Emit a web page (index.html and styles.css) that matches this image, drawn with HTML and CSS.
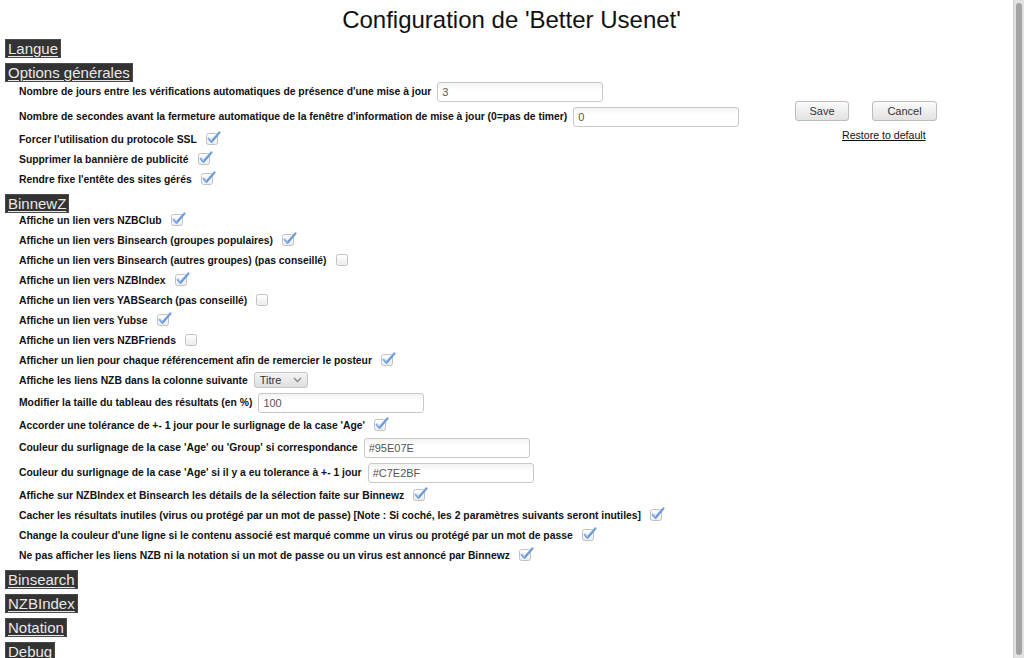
FILE: index.html
```html
<!DOCTYPE html>
<html lang="fr">
<head>
<meta charset="utf-8">
<title>Configuration de 'Better Usenet'</title>
<link rel="stylesheet" href="styles.css">
</head>
<body>
<svg class="defs" width="0" height="0" aria-hidden="true">
  <defs>
    <linearGradient id="cbg" x1="0" y1="0" x2="0" y2="1">
      <stop offset="0" stop-color="#ffffff"/>
      <stop offset="1" stop-color="#ececec"/>
    </linearGradient>
    <linearGradient id="chk" x1="0" y1="0" x2="1" y2="1">
      <stop offset="0" stop-color="#9cc0ec"/>
      <stop offset="1" stop-color="#4580cc"/>
    </linearGradient>
    <symbol id="box" viewBox="0 0 15 17">
      <rect x="0.5" y="4.5" width="11" height="11" rx="2" fill="url(#cbg)" stroke="#c2c2c2"/>
    </symbol>
    <symbol id="tick" viewBox="0 0 15 17">
      <rect x="0.5" y="4.5" width="11" height="11" rx="2" fill="url(#cbg)" stroke="#c2c2c2"/>
      <path d="M2.8 9.6 L5.6 12.6 L13.4 3.4" fill="none" stroke="url(#chk)" stroke-width="2.3" stroke-linejoin="round" stroke-linecap="round"/>
      <path d="M3.3 9.4 L5.6 11.6" fill="none" stroke="#d6e6f8" stroke-width="0.8" stroke-linecap="round"/>
    </symbol>
  </defs>
</svg>

<div class="scrollbar" aria-hidden="true"><div class="thumb"></div></div>

<h1 class="title">Configuration de 'Better Usenet'</h1>

<section class="section">
  <a class="section-title" href="#">Langue</a>
</section>

<section class="section">
  <a class="section-title" href="#">Options générales</a>
  <div class="general">
    <div class="rows rows-general">
      <div class="row row-input"><span class="label">Nombre de jours entre les vérifications automatiques de présence d'une mise à jour</span><input class="text" type="text" value="3"></div>
      <div class="row row-input"><span class="label">Nombre de secondes avant la fermeture automatique de la fenêtre d'information de mise à jour (0=pas de timer)</span><input class="text" type="text" value="0"></div>
      <div class="row"><span class="label">Forcer l'utilisation du protocole SSL</span><svg class="cb"><use href="#tick"/></svg></div>
      <div class="row"><span class="label">Supprimer la bannière de publicité</span><svg class="cb"><use href="#tick"/></svg></div>
      <div class="row"><span class="label">Rendre fixe l'entête des sites gérés</span><svg class="cb"><use href="#tick"/></svg></div>
    </div>
    <div class="actions">
      <div class="buttons">
        <button class="btn btn-save" type="button">Save</button>
        <button class="btn btn-cancel" type="button">Cancel</button>
      </div>
      <a class="restore" href="#">Restore to default</a>
    </div>
  </div>
</section>

<section class="section">
  <a class="section-title" href="#">BinnewZ</a>
  <div class="rows rows-binnewz">
    <div class="row"><span class="label">Affiche un lien vers NZBClub</span><svg class="cb"><use href="#tick"/></svg></div>
    <div class="row"><span class="label">Affiche un lien vers Binsearch (groupes populaires)</span><svg class="cb"><use href="#tick"/></svg></div>
    <div class="row"><span class="label">Affiche un lien vers Binsearch (autres groupes) (pas conseillé)</span><svg class="cb"><use href="#box"/></svg></div>
    <div class="row"><span class="label">Affiche un lien vers NZBIndex</span><svg class="cb"><use href="#tick"/></svg></div>
    <div class="row"><span class="label">Affiche un lien vers YABSearch (pas conseillé)</span><svg class="cb"><use href="#box"/></svg></div>
    <div class="row"><span class="label">Affiche un lien vers Yubse</span><svg class="cb"><use href="#tick"/></svg></div>
    <div class="row"><span class="label">Affiche un lien vers NZBFriends</span><svg class="cb"><use href="#box"/></svg></div>
    <div class="row"><span class="label">Afficher un lien pour chaque référencement afin de remercier le posteur</span><svg class="cb"><use href="#tick"/></svg></div>
    <div class="row"><span class="label">Affiche les liens NZB dans la colonne suivante</span><span class="select">Titre<svg class="chev" width="9" height="6" viewBox="0 0 9 6"><path d="M1 1 L4.5 4.5 L8 1" fill="none" stroke="#888" stroke-width="1.4"/></svg></span></div>
    <div class="row row-input"><span class="label">Modifier la taille du tableau des résultats (en %)</span><input class="text" type="text" value="100"></div>
    <div class="row"><span class="label">Accorder une tolérance de +- 1 jour pour le surlignage de la case 'Age'</span><svg class="cb"><use href="#tick"/></svg></div>
    <div class="row row-input"><span class="label">Couleur du surlignage de la case 'Age' ou 'Group' si correspondance</span><input class="text" type="text" value="#95E07E"></div>
    <div class="row row-input"><span class="label">Couleur du surlignage de la case 'Age' si il y a eu tolerance à +- 1 jour</span><input class="text" type="text" value="#C7E2BF"></div>
    <div class="row"><span class="label">Affiche sur NZBIndex et Binsearch les détails de la sélection faite sur Binnewz</span><svg class="cb"><use href="#tick"/></svg></div>
    <div class="row"><span class="label">Cacher les résultats inutiles (virus ou protégé par un mot de passe) [Note : Si coché, les 2 paramètres suivants seront inutiles]</span><svg class="cb"><use href="#tick"/></svg></div>
    <div class="row"><span class="label">Change la couleur d'une ligne si le contenu associé est marqué comme un virus ou protégé par un mot de passe</span><svg class="cb"><use href="#tick"/></svg></div>
    <div class="row"><span class="label">Ne pas afficher les liens NZB ni la notation si un mot de passe ou un virus est annoncé par Binnewz</span><svg class="cb"><use href="#tick"/></svg></div>
  </div>
</section>

<section class="section">
  <a class="section-title" href="#">Binsearch</a>
</section>
<section class="section">
  <a class="section-title" href="#">NZBIndex</a>
</section>
<section class="section">
  <a class="section-title" href="#">Notation</a>
</section>
<section class="section">
  <a class="section-title" href="#">Debug</a>
</section>
</body>
</html>
```

FILE: styles.css
```css
html {
  background: #ffffff;
  scrollbar-width: none;
}

html::-webkit-scrollbar {
  display: none;
}

body {
  margin: 0;
  padding: 0 17px 6px 5px;
  font-family: "Liberation Sans", Arial, sans-serif;
  color: #111;
}

.defs {
  position: absolute;
  width: 0;
  height: 0;
  overflow: hidden;
}

/* window scrollbar drawn over the page's right edge */
.scrollbar {
  position: fixed;
  top: 0;
  right: 0;
  bottom: 0;
  width: 11px;
  background: #e2e2e2;
  border-left: 1px solid #d3d3d3;
  display: flex;
  justify-content: center;
  padding: 3px 0;
  box-sizing: border-box;
}

.thumb {
  width: 6px;
  height: 100%;
  border-radius: 3px;
  background: #a3a3a3;
}

.title {
  margin: 6px 0 0 0;
  padding-left: 11px;
  font-size: 24px;
  line-height: 28px;
  font-weight: normal;
  text-align: center;
  color: #111;
}

.section {
  display: block;
}

.section-title {
  display: inline-block;
  margin-top: 5px;
  padding: 0 2px;
  box-sizing: border-box;
  height: 19px;
  line-height: 17px;
  font-size: 15px;
  color: #e8e8e8;
  background: #333333;
  border: 1px solid #4a4a4a;
  text-decoration: underline;
  text-underline-offset: 2px;
  vertical-align: top;
}

.general {
  display: flex;
  align-items: flex-start;
}

.rows {
  display: flex;
  flex-direction: column;
  padding-left: 14px;
  flex: 1;
}

.rows-general {
  margin-top: -3px;
}

.rows-binnewz {
  margin-top: -3px;
}

.row {
  display: flex;
  align-items: center;
  height: 20px;
}

.row-input {
  height: 25px;
}

.label {
  font-size: 10.35px;
  font-weight: bold;
  color: #111;
  white-space: nowrap;
}

.cb {
  width: 15px;
  height: 17px;
  margin-left: 9px;
  margin-top: -4px;
  flex: none;
}

.text {
  width: 166px;
  height: 20px;
  box-sizing: border-box;
  margin: 0 0 0 6px;
  padding: 0 4px;
  border: 1px solid #c9c9c9;
  border-radius: 3px;
  background: linear-gradient(#f3f3f3, #ffffff 40%);
  font-family: "Liberation Sans", Arial, sans-serif;
  font-size: 11px;
  color: #555;
  outline: none;
}

.select {
  display: inline-flex;
  align-items: center;
  justify-content: space-between;
  box-sizing: border-box;
  width: 54px;
  height: 16px;
  margin-left: 6px;
  padding: 0 5px 0 5px;
  border: 1px solid #c4c4c4;
  border-radius: 3px;
  background: linear-gradient(#f4f4f4, #dedede);
  font-size: 11px;
  color: #333;
}

.chev {
  flex: none;
}

.actions {
  display: flex;
  flex-direction: column;
  width: 142px;
  margin: 19px 70px 0 0;
}

.buttons {
  display: flex;
  gap: 23px;
}

.btn {
  height: 20px;
  box-sizing: border-box;
  border: 1px solid #bcbcbc;
  border-radius: 3px;
  background: linear-gradient(#fbfbfb, #e2e2e2);
  font-family: "Liberation Sans", Arial, sans-serif;
  font-size: 11px;
  color: #333;
  padding: 0;
}

.btn-save {
  width: 54px;
}

.btn-cancel {
  width: 65px;
}

.restore {
  margin: 8px 0 0 47px;
  font-size: 10.6px;
  color: #111;
  text-decoration: underline;
}
```
